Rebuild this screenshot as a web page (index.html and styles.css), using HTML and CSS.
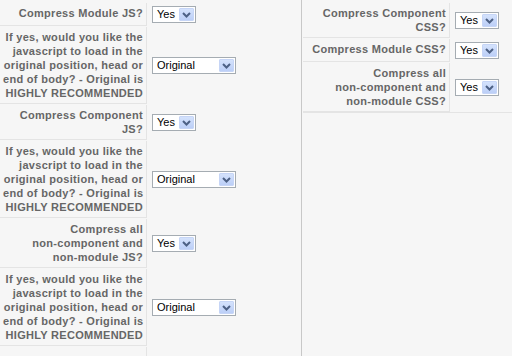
FILE: index.html
```html
<!DOCTYPE html>
<html lang="en">
<head>
    <meta charset="UTF-8">
    <title>Compression Settings</title>
    <link rel="stylesheet" href="styles.css">
</head>
<body>
    <div class="page">
        <div class="col col-left">
            <div class="admintable">
                <div class="key">Compress Module JS?</div>
                <div class="val">
                    <span class="select select-short"><span class="select-text">Yes</span><span class="select-btn"><svg width="9" height="6" viewBox="0 0 9 6"><polyline points="1,1 4.5,4.5 8,1" fill="none" stroke="#4d6185" stroke-width="2"/></svg></span></span>
                </div>

                <div class="key">If yes, would you like the<br>javascript to load in the<br>original position, head or<br>end of body? - Original is<br>HIGHLY RECOMMENDED</div>
                <div class="val">
                    <span class="select select-long"><span class="select-text">Original</span><span class="select-btn"><svg width="9" height="6" viewBox="0 0 9 6"><polyline points="1,1 4.5,4.5 8,1" fill="none" stroke="#4d6185" stroke-width="2"/></svg></span></span>
                </div>

                <div class="key">Compress Component<br>JS?</div>
                <div class="val">
                    <span class="select select-short"><span class="select-text">Yes</span><span class="select-btn"><svg width="9" height="6" viewBox="0 0 9 6"><polyline points="1,1 4.5,4.5 8,1" fill="none" stroke="#4d6185" stroke-width="2"/></svg></span></span>
                </div>

                <div class="key">If yes, would you like the<br>javscript to load in the<br>original position, head or<br>end of body? - Original is<br>HIGHLY RECOMMENDED</div>
                <div class="val">
                    <span class="select select-long"><span class="select-text">Original</span><span class="select-btn"><svg width="9" height="6" viewBox="0 0 9 6"><polyline points="1,1 4.5,4.5 8,1" fill="none" stroke="#4d6185" stroke-width="2"/></svg></span></span>
                </div>

                <div class="key">Compress all<br>non-component and<br>non-module JS?</div>
                <div class="val">
                    <span class="select select-short"><span class="select-text">Yes</span><span class="select-btn"><svg width="9" height="6" viewBox="0 0 9 6"><polyline points="1,1 4.5,4.5 8,1" fill="none" stroke="#4d6185" stroke-width="2"/></svg></span></span>
                </div>

                <div class="key">If yes, would you like the<br>javascript to load in the<br>original position, head or<br>end of body? - Original is<br>HIGHLY RECOMMENDED</div>
                <div class="val">
                    <span class="select select-long"><span class="select-text">Original</span><span class="select-btn"><svg width="9" height="6" viewBox="0 0 9 6"><polyline points="1,1 4.5,4.5 8,1" fill="none" stroke="#4d6185" stroke-width="2"/></svg></span></span>
                </div>

                <div class="key">&nbsp;</div>
                <div class="val"></div>
            </div>
        </div>

        <div class="col col-right">
            <div class="admintable admintable-end">
                <div class="key">Compress Component<br>CSS?</div>
                <div class="val">
                    <span class="select select-short"><span class="select-text">Yes</span><span class="select-btn"><svg width="9" height="6" viewBox="0 0 9 6"><polyline points="1,1 4.5,4.5 8,1" fill="none" stroke="#4d6185" stroke-width="2"/></svg></span></span>
                </div>

                <div class="key">Compress Module CSS?</div>
                <div class="val">
                    <span class="select select-short"><span class="select-text">Yes</span><span class="select-btn"><svg width="9" height="6" viewBox="0 0 9 6"><polyline points="1,1 4.5,4.5 8,1" fill="none" stroke="#4d6185" stroke-width="2"/></svg></span></span>
                </div>

                <div class="key">Compress all<br>non-component and<br>non-module CSS?</div>
                <div class="val">
                    <span class="select select-short"><span class="select-text">Yes</span><span class="select-btn"><svg width="9" height="6" viewBox="0 0 9 6"><polyline points="1,1 4.5,4.5 8,1" fill="none" stroke="#4d6185" stroke-width="2"/></svg></span></span>
                </div>
            </div>
        </div>
    </div>
</body>
</html>
```

FILE: styles.css
```css
body {
    margin: 0;
    background: #f6f6f6;
    font-family: "Liberation Sans", Arial, sans-serif;
    font-size: 11px;
}
.page {
    display: flex;
    height: 356px;
    overflow: hidden;
}
.col-left {
    width: 301px;
}
.col-right {
    flex: 1;
    border-left: 1px solid #c8c8c8;
    padding-left: 1px;
}
.admintable {
    display: grid;
    grid-template-columns: 147px 1fr;
    gap: 1px;
    padding-top: 3px;
}
.admintable-end {
    border-bottom: 1px solid #e4e4e4;
}
.key {
    box-sizing: border-box;
    padding: 3px;
    text-align: right;
    font-weight: bold;
    letter-spacing: 0.3px;
    line-height: 14px;
    color: #666666;
    white-space: nowrap;
    background: #f6f6f6;
    border-right: 1px solid #e4e4e4;
    border-bottom: 1px solid #e4e4e4;
}
.val {
    display: flex;
    align-items: center;
    padding: 3px 4px;
}
.select {
    display: flex;
    align-items: center;
    box-sizing: border-box;
    height: 17px;
    background: #ffffff;
    border: 1px solid #a5acb2;
    padding: 1px;
}
.select-short {
    width: 44px;
}
.select-long {
    width: 84px;
}
.select-text {
    flex: 1;
    padding-left: 3px;
    font-size: 11px;
    color: #000000;
    line-height: 13px;
}
.select-btn {
    display: flex;
    align-items: center;
    justify-content: center;
    box-sizing: border-box;
    width: 15px;
    height: 13px;
    background: linear-gradient(#d4e2fc, #bccff7);
    border: 1px solid #c6d5f6;
    border-radius: 1px;
}
```
